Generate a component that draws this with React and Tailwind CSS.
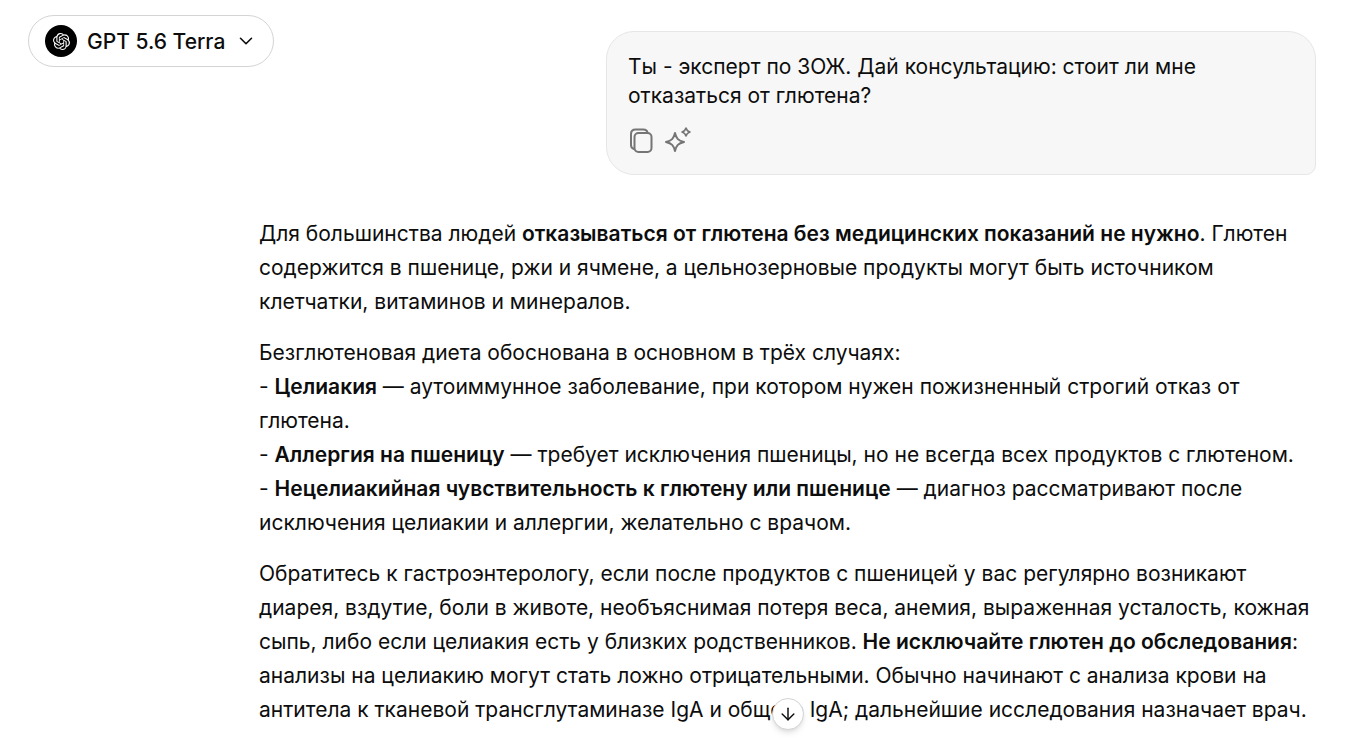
import React from 'react';
import { ArrowDown, ChevronDown } from 'lucide-react';
import { SiOpenai } from 'react-icons/si';

const CopyIcon = () => (
    <svg width="24" height="26" viewBox="0 0 24 26" fill="none" stroke="currentColor" strokeWidth="2" strokeLinecap="round" strokeLinejoin="round">
        <rect x="4.5" y="5" width="17" height="19" rx="4" />
        <path d="M4 21C2 20.5 1 19 1 17V6C1 3 2.5 1.5 5.5 1.5H13.5C15.5 1.5 17 2.5 17.5 4.5" />
    </svg>
);

const SparklesIcon = () => (
    <svg width="28" height="28" viewBox="0 0 28 28" fill="none" stroke="currentColor" strokeLinejoin="round">
        <path strokeWidth="2" d="M11 7C12.4 12.8 14.2 14.6 20 16C14.2 17.4 12.4 19.2 11 25C9.6 19.2 7.8 17.4 2 16C7.8 14.6 9.6 12.8 11 7Z" />
        <path strokeWidth="1.6" d="M22 2C22.7 4.5 23.5 5.3 26 6C23.5 6.7 22.7 7.5 22 10C21.3 7.5 20.5 6.7 18 6C20.5 5.3 21.3 4.5 22 2Z" />
    </svg>
);

const cases = [
    { name: 'Целиакия', text: 'аутоиммунное заболевание, при котором нужен пожизненный строгий отказ от глютена.' },
    { name: 'Аллергия на пшеницу', text: 'требует исключения пшеницы, но не всегда всех продуктов с глютеном.' },
    { name: 'Нецелиакийная чувствительность к глютену или пшенице', text: 'диагноз рассматривают после исключения целиакии и аллергии, желательно с врачом.' },
];

const ModelPicker = () => (
    <button className="flex h-[52px] shrink-0 items-center rounded-full border border-[#d4d4d4] bg-white pl-4 pr-4 text-[21px] font-medium whitespace-nowrap">
        <span className="mr-[10px] flex size-8 items-center justify-center rounded-full bg-black text-white">
            <SiOpenai size={17} />
        </span>
        <span className="pt-[2px]">GPT 5.6 Terra</span>
        <ChevronDown size={22} strokeWidth={1.75} className="ml-[10px]" />
    </button>
);

const UserMessage = () => (
    <div className="ml-auto w-[710px] max-w-full rounded-[28px] rounded-br-[10px] border border-[#e6e6e6] bg-[#f7f7f7] px-[21px] pt-5 pb-5">
        <p className="text-[21px] leading-[29px]">
            Ты - эксперт по ЗОЖ. Дай консультацию: стоит ли мне отказаться от глютена?
        </p>
        <div className="mt-4 flex items-start gap-[10px] text-[#757575]">
            <button aria-label="Скопировать" className="pt-[2px] pl-[2px]"><CopyIcon /></button>
            <button aria-label="Улучшить"><SparklesIcon /></button>
        </div>
    </div>
);

const Answer = () => (
    <article className="mt-[42px] space-y-[17px] text-[21px] leading-[34px]">
        <p>
            Для большинства людей <strong className="font-semibold">отказываться от глютена без медицинских показаний не нужно</strong>. Глютен содержится в пшенице, ржи и ячмене, а цельнозерновые продукты могут быть источником клетчатки, витаминов и минералов.
        </p>
        <div>
            <p>Безглютеновая диета обоснована в основном в трёх случаях:</p>
            {cases.map((c) => (
                <p key={c.name}>
                    - <strong className="font-semibold">{c.name}</strong> — {c.text}
                </p>
            ))}
        </div>
        <p>
            Обратитесь к гастроэнтерологу, если после продуктов с пшеницей у вас регулярно возникают диарея, вздутие, боли в животе, необъяснимая потеря веса, анемия, выраженная усталость, кожная сыпь, либо если целиакия есть у близких родственников. <strong className="font-semibold">Не исключайте глютен до обследования</strong>: анализы на целиакию могут стать ложно отрицательными. Обычно начинают с анализа крови на антитела к тканевой трансглутаминазе IgA и общего IgA; дальнейшие исследования назначает врач.
        </p>
    </article>
);

const App = () => {
    return (
        <div className="flex h-screen overflow-hidden bg-white font-['Inter','Noto_Sans',sans-serif] text-[#0d0d0d]">
            <header className="flex w-[259px] shrink-0 items-start pt-[15px] pl-7">
                <ModelPicker />
            </header>
            <main className="relative mr-[51px] min-w-0 flex-1 pt-[31px]">
                <UserMessage />
                <Answer />
                {/* Scroll to bottom */}
                <button aria-label="Вниз" className="absolute inset-x-0 bottom-2 mx-auto flex size-8 items-center justify-center rounded-full border border-[#d4d4d4] bg-white shadow-md">
                    <ArrowDown size={20} strokeWidth={1.75} />
                </button>
            </main>
        </div>
    );
};

export default App;
